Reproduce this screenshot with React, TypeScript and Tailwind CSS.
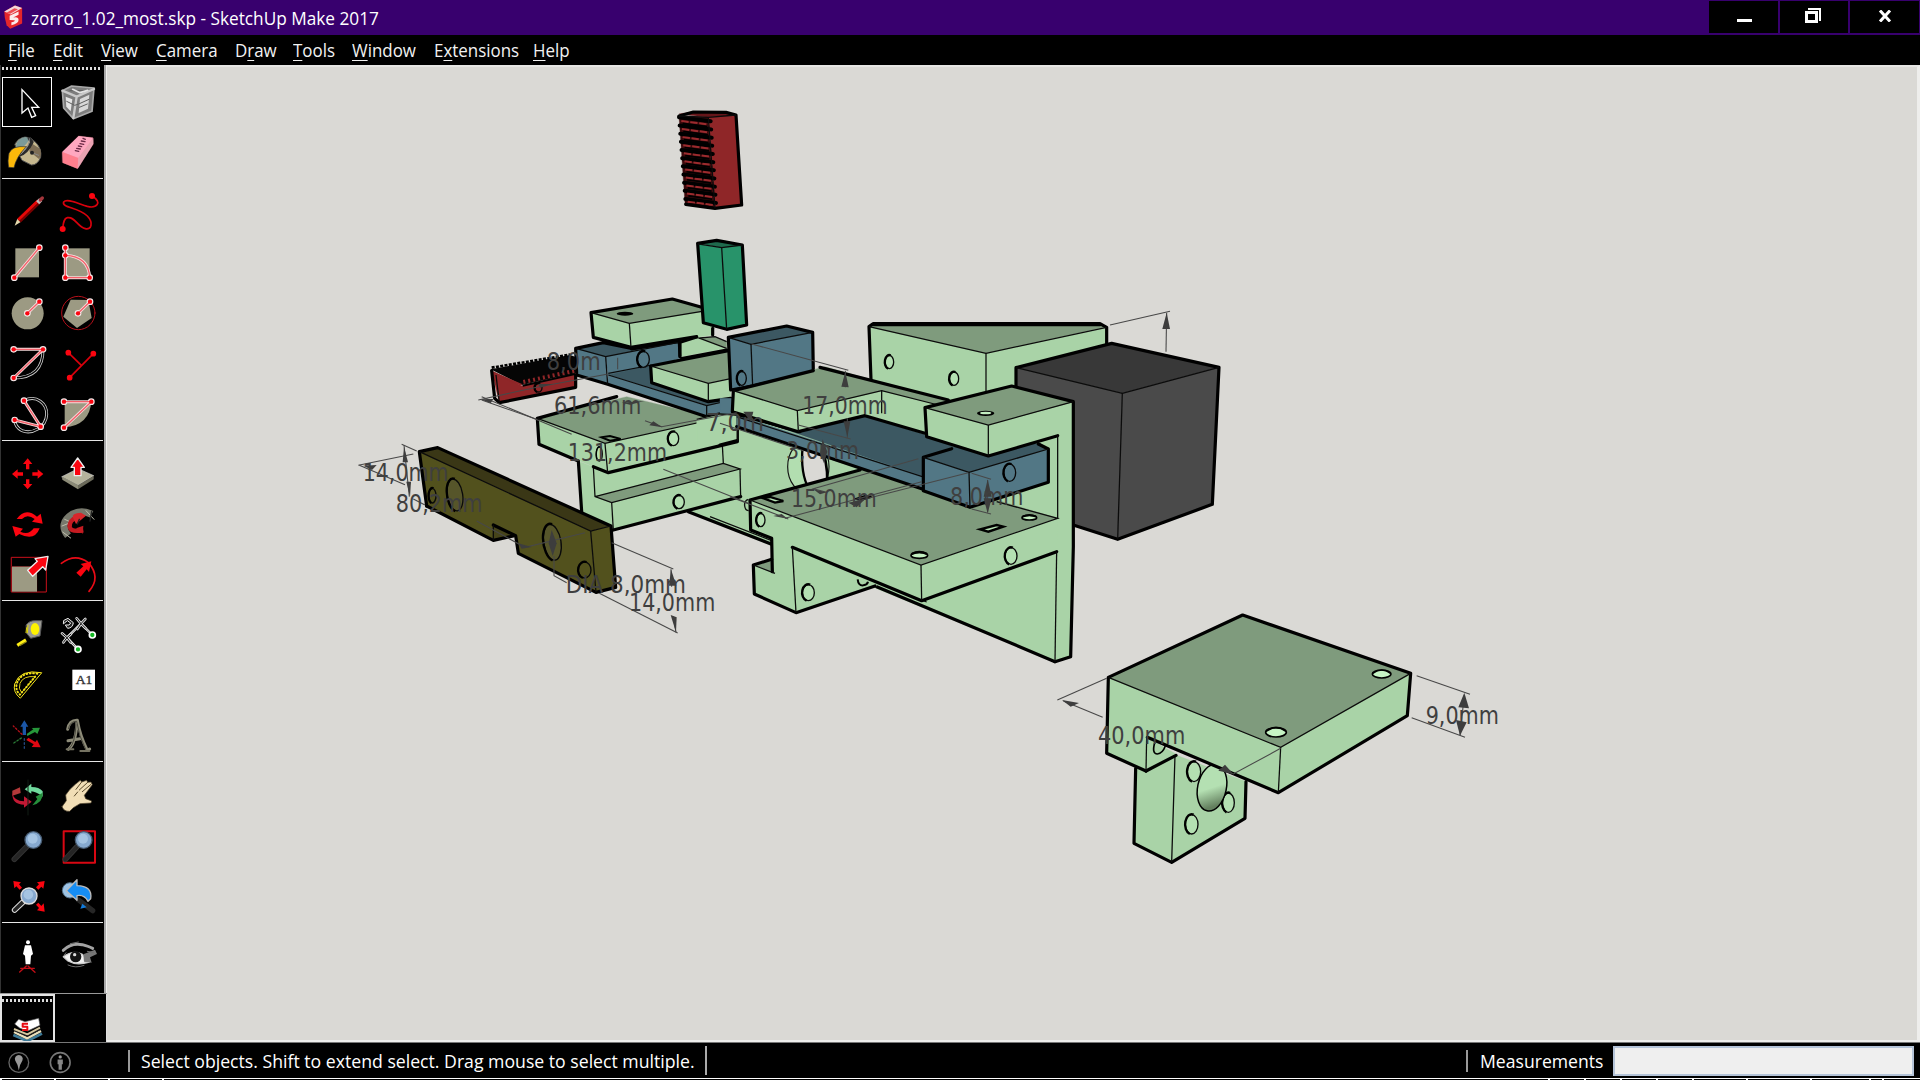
import type { ReactNode } from "react";

const LIGHT = "#a9d3a7";
const MID = "#7f9b7d";
const BLUE = "#527785";
const NAVY = "#3c5862";
const OLIVE = "#52511d";
const RED = "#8f2628";
const SAND = "#9c9a83";
const HOT = "#fb0510";

/* ---------- toolbar icons ---------- */

function Cell({ x, y, active, children }: { x: number; y: number; active?: boolean; children: ReactNode }) {
  return (
    <div className={active ? "h-[50px] w-[50px] outline outline-1 -outline-offset-1 outline-white" : "h-[50px] w-[50px]"}>
      <svg viewBox={`${x} ${y} 150 150`} className="block h-[50px] w-[50px] overflow-visible" fill="none" strokeLinejoin="round" strokeLinecap="round">
        {children}
      </svg>
    </div>
  );
}

function Nodes({ pts, lines }: { pts: number[][]; lines: string }) {
  return (
    <>
      <path d={lines} stroke="#f6dcdc" strokeWidth="9" />
      {pts.map((p, i) => (
        <circle key={i} cx={p[0]} cy={p[1]} r="10" fill="#f4eaea" />
      ))}
      <path d={lines} stroke="#f4606a" strokeWidth="4" />
      {pts.map((p, i) => (
        <circle key={i} cx={p[0]} cy={p[1]} r="6.5" fill={HOT} />
      ))}
    </>
  );
}

function Group({ children, pad }: { children: ReactNode; pad: string }) {
  return (
    <div className={`border-b border-[#e6e6e6] ${pad}`}>
      <div className="grid grid-cols-[50px_50px]">{children}</div>
    </div>
  );
}

const L = 6;
const R = 156;

function Magnifier({ cx, cy, r, to, edge = "#333" }: { cx: number; cy: number; r: number; to: number[]; edge?: string }) {
  return (
    <>
      <path d={`M${cx - r * 0.8} ${cy + r * 0.8} L${to[0]} ${to[1]}`} stroke={edge} strokeWidth="17" />
      <path d={`M${cx - r * 0.8} ${cy + r * 0.8} L${to[0]} ${to[1]}`} stroke="#252525" strokeWidth="11" />
      <circle cx={cx} cy={cy} r={r} fill="#86a9cf" stroke={edge === "#333" ? "#465a70" : "#ddd"} strokeWidth="4" />
      <circle cx={cx - 2} cy={cy - 4} r={r * 0.6} fill="#a5c4e2" />
    </>
  );
}

function Toolbar() {
  return (
    <div className="flex w-[107px] shrink-0 flex-col bg-black">
      <div className="flex h-[928px]">
        <div className="w-[104px] border-l border-[#333] pl-px pt-[2px]">
          <div className="mb-[7px] h-[3px] w-[100px] bg-[repeating-linear-gradient(90deg,#ddd_0_2px,#000_2px_4px)]" />
          <div className="w-[101px]">
            <Group pad="pb-px">
              <Cell x={L} y={39} active>
                <path d="M66 77V147L84 132L95 160L107 155L95 130L116 130Z" fill="#000" stroke="#fff" strokeWidth="4" strokeLinejoin="miter" />
              </Cell>
              <Cell x={R} y={39}>
                <path d="M187 80L215 66L282 72L276 142L220 164L191 132Z" fill="#7d7d7d" stroke="#aaa" strokeWidth="5" />
                <path d="M187 80L230 98L220 162M230 98L282 75" stroke="#c9c9c9" strokeWidth="7" />
                <path d="M197 98L217 106L212 142L199 128Z" fill="#e5e5e5" />
                <path d="M240 105L268 92L264 134L236 147Z" fill="#d8d8d8" />
                <path d="M200 112L224 124L236 120L267 106M238 130L262 120M210 80L262 80" stroke="#5f5f5f" strokeWidth="3" />
                <path d="M218 76L240 86L263 79" stroke="#e5e5e5" strokeWidth="5" />
              </Cell>
              <Cell x={L} y={189}>
                <path d="M45 240Q55 222 75 219L92 222L108 236Q126 255 122 280Q112 304 94 303L66 289L56 270Z" fill="#c6b88f" stroke="#555" strokeWidth="3" />
                <path d="M48 242Q55 222 78 219L88 226Q76 252 50 256Z" fill="#7c9a98" />
                <path d="M92 236L121 255Q126 274 117 285L88 262Z" fill="#7e6e55" />
                <path d="M88 224L96 234Q80 266 60 272" stroke="#2b2b2b" strokeWidth="10" />
                <path d="M96 266L116 274M88 224Q92 245 62 271" stroke="#888" strokeWidth="3" />
                <circle cx="96" cy="266" r="6" fill="#222" />
                <path d="M78 248Q36 244 27 268Q22 292 26 310L42 311Q48 280 78 248Z" fill="#fbb80a" stroke="#333" strokeWidth="2" />
              </Cell>
              <Cell x={R} y={189}>
                <path d="M187 264L236 216L279 221L280 240L233 314L188 296Z" fill="#f9a0b2" stroke="#5b2b35" strokeWidth="2" />
                <path d="M187 264L236 216L279 221L235 282Z" fill="#ffa8c0" />
                <path d="M187 264L235 282L233 314L188 296Z" fill="#ff7f8e" />
                <path d="M235 282L280 222L280 240L233 314Z" fill="#e9a3b2" />
                <path d="M226 260L236 262M230 253L241 255M235 246L245 248M240 239L251 241M244 231L255 233M249 223L256 226" stroke="#6a2a46" strokeWidth="4" />
              </Cell>
            </Group>
            <Group pad="pt-[9px] pb-[2px]">
              <Cell x={L} y={372}>
                <path d="M44 485L52 464L62 474Z" fill="#e4d9ad" />
                <path d="M57 470L117 412" stroke="#7a0000" strokeWidth="15" strokeLinecap="butt" />
                <path d="M55 467L114 410" stroke="#e60808" strokeWidth="8" strokeLinecap="butt" />
                <path d="M113 416L122 407" stroke="#bbb" strokeWidth="13" strokeLinecap="butt" />
                <path d="M121 408L127 402" stroke="#a5363c" strokeWidth="10" />
              </Cell>
              <Cell x={R} y={372}>
                <path d="M276 396C310 416 288 434 262 427C232 418 200 402 191 414C184 431 235 430 262 456C281 476 274 499 256 494C232 488 224 456 202 461C190 464 190 480 188 495" stroke="#d9000c" strokeWidth="5" />
                <circle cx="276" cy="396" r="9" fill={HOT} /><circle cx="188" cy="495" r="9" fill={HOT} />
              </Cell>
              <Cell x={L} y={522}>
                <rect x="46" y="553" width="71" height="87" fill={SAND} />
                <Nodes pts={[[118, 551], [43, 641]]} lines="M118 551L43 641" />
              </Cell>
              <Cell x={R} y={522}>
                <rect x="196" y="553" width="73" height="87" fill={SAND} />
                <Nodes pts={[[196, 551], [196, 574], [196, 641], [269, 641]]} lines="M196 551V641H269Q266 577 196 574" />
              </Cell>
              <Cell x={L} y={672}>
                <circle cx="83" cy="748" r="48" fill={SAND} />
                <Nodes pts={[[82, 748], [118, 713]]} lines="M82 748L118 713" />
              </Cell>
              <Cell x={R} y={672}>
                <path d="M212 707L265 708L275 762L231 792L190 758Z" fill={SAND} />
                <circle cx="235" cy="747" r="50" stroke="#b5101a" strokeWidth="3" />
                <Nodes pts={[[234, 748], [270, 713]]} lines="M234 748L270 713" />
              </Cell>
              <Cell x={L} y={822}>
                <path d="M129 856Q130 942 41 942" stroke="#ccc" strokeWidth="9" /><path d="M129 856Q130 942 41 942" stroke="#000" strokeWidth="4" />
                <Nodes pts={[[41, 856], [129, 856], [41, 942]]} lines="M41 856H129L41 942" />
              </Cell>
              <Cell x={R} y={822}>
                <path d="M205 866L244 904M280 869L209 941" stroke="#d9000c" strokeWidth="5" />
                <circle cx="205" cy="866" r="8.5" fill={HOT} /><circle cx="280" cy="869" r="8.5" fill={HOT} /><circle cx="209" cy="941" r="8.5" fill={HOT} />
              </Cell>
              <Cell x={L} y={972}>
                <path d="M72 1010C110 990 142 1020 140 1052C138 1090 96 1112 66 1100Q46 1090 44 1068" stroke="#ccc" strokeWidth="9" />
                <path d="M72 1010C110 990 142 1020 140 1052C138 1090 96 1112 66 1100Q46 1090 44 1068" stroke="#000" strokeWidth="4" />
                <Nodes pts={[[72, 1010], [122, 1088], [44, 1068]]} lines="M72 1010L122 1088L44 1068" />
              </Cell>
              <Cell x={R} y={972}>
                <path d="M194 1013H274Q268 1084 194 1090Z" fill={SAND} />
                <Nodes pts={[[192, 1013], [274, 1013], [192, 1091]]} lines="M192 1013H274L192 1091" />
              </Cell>
            </Group>
            <Group pad="pt-[8px] pb-px">
              <Cell x={L} y={39}>
                <path d="M83 67L97 84H88V100H78V84H69ZM83 160L97 144H88V130H78V144H69ZM36 114L53 100V109H69V119H53V128ZM130 114L113 100V109H97V119H113V128Z" fill={HOT} />
              </Cell>
              <Cell x={R} y={39}>
                <path d="M186 122L234 98L281 119L234 148Z" fill="#b5b39c" stroke="#ddd" strokeWidth="2" />
                <path d="M186 122L234 148V160L187 131Z" fill="#8b8a76" /><path d="M281 119L234 148V160L281 130Z" fill="#6b6a5a" />
                <path d="M233 66L253 94H243V119H223V94H213Z" fill={HOT} stroke="#eee" strokeWidth="4" />
              </Cell>
              <Cell x={L} y={189}>
                <path d="M50 249Q76 212 111 242L122 233L128 263L96 257L104 249Q82 232 66 249Z" fill={HOT} />
                <path d="M119 277Q104 317 58 294L47 302L37 270L69 278L61 287Q86 299 101 277Z" fill={HOT} />
              </Cell>
              <Cell x={R} y={189}>
                <path d="M204 299Q175 262 217 235Q245 220 275 235" stroke="#77786c" strokeWidth="22" strokeLinecap="butt" />
                <path d="M188 288L212 306M186 270L206 262M194 250L212 258M258 224L282 250" stroke="#bdbdab" strokeWidth="3" />
                <path d="M250 283Q202 291 210 263Q216 245 240 245" stroke="#c41b21" strokeWidth="13" strokeLinecap="butt" />
                <path d="M219 245Q214 231 243 230L258 239L228 264Z" fill="#d8262b" /><path d="M228 277L250 269L248 293Z" fill="#c41b21" />
                <path d="M238 250L232 264M275 226L270 255" stroke="#222" strokeWidth="4" />
              </Cell>
              <Cell x={L} y={339}>
                <path d="M35 364H139V468H35Z" stroke="#c9101b" strokeWidth="3" />
                <path d="M110 364V468M35 392H139" stroke="#7b0a10" strokeWidth="3" />
                <rect x="36" y="392" width="75" height="75" fill={SAND} />
                <path d="M144 361L137 402L128 392L98 421L83 403L112 376L105 368Z" fill={HOT} stroke="#eee" strokeWidth="4" />
              </Cell>
              <Cell x={R} y={339}>
                <path d="M184 382Q226 350 265 380Q304 424 267 466" stroke="#e80b16" strokeWidth="5" />
                <path d="M274 376L267 408L260 400L242 422L229 410L250 391L242 384Z" fill={HOT} />
              </Cell>
            </Group>
            <Group pad="pt-[8px] pb-[2px]">
              <Cell x={L} y={519}>
                <path d="M52 628L78 612" stroke="#ffef14" strokeWidth="10" strokeLinecap="butt" />
                <path d="M60 628L78 618" stroke="#8a8212" strokeWidth="4" />
                <path d="M79 566Q88 553 108 554L126 554L120 600L92 607L80 592Z" fill="#9b9a93" stroke="#555" strokeWidth="3" />
                <ellipse cx="105" cy="579" rx="13" ry="18" fill="#fff200" /><path d="M84 568L82 590M80 575L78 590" stroke="#ddd200" strokeWidth="3" />
              </Cell>
              <Cell x={R} y={519}>
                <path d="M201 605L234 640M243 563L277 597M201 605L243 563" stroke="#eee" strokeWidth="7" />
                <path d="M201 605L234 640M243 563L277 597M201 605L243 563" stroke="#444" strokeWidth="2" />
                <path d="M186 592L201 605L190 619M213 594L201 605L212 619M230 547L243 563L232 579M256 549L243 563L257 577" stroke="#ddd" strokeWidth="8" />
                <path d="M186 592L201 605L190 619M213 594L201 605L212 619M230 547L243 563L232 579M256 549L243 563L257 577" stroke="#111" strokeWidth="3" />
                <path d="M192 553L204 547L220 560Q218 576 203 577L196 567H207L212 561L202 554L191 563Z" fill="#222" stroke="#eee" strokeWidth="3" />
                <circle cx="277" cy="597" r="9" fill="#13b824" stroke="#fff" strokeWidth="5" /><circle cx="234" cy="640" r="9" fill="#13b824" stroke="#fff" strokeWidth="5" />
              </Cell>
              <Cell x={L} y={669}>
                <path d="M124 710Q60 698 44 744Q38 768 60 786Z" stroke="#f8e71b" strokeWidth="3" />
                <path d="M105 722Q70 718 60 742Q54 758 64 769Z" stroke="#dfcf18" strokeWidth="3" />
                <path d="M112 713Q62 706 50 744Q46 764 60 776L110 716" stroke="#f3e21a" strokeWidth="6" strokeDasharray="2 8" />
              </Cell>
              <Cell x={R} y={669}>
                <rect x="217" y="701" width="68" height="61" fill="#fff" />
                <text x="227" y="743" fontSize="35" fill="#333" stroke="#333" strokeWidth="1" textLength="50" lengthAdjust="spacingAndGlyphs" fontFamily="Liberation Serif, serif">A1</text>
              </Cell>
              <Cell x={L} y={819}>
                <path d="M73 853L85 872H78V897H68V872H61Z" fill="#1b56a6" /><path d="M73 908V944" stroke="#23477d" strokeWidth="4" strokeDasharray="5 7" />
                <path d="M120 875L112 894L105 888L82 900L80 894L100 880L95 876Z" fill="#26963a" /><path d="M64 906L40 922" stroke="#2b7d38" strokeWidth="4" strokeDasharray="5 6" />
                <path d="M122 934L95 933L101 925L79 912L85 905L106 918L111 911Z" fill="#e00812" /><path d="M66 895L40 870" stroke="#b41019" strokeWidth="4" strokeDasharray="5 6" />
              </Cell>
              <Cell x={R} y={819}>
                <path d="M203 880Q208 852 232 853Q240 900 262 943L269 939M205 940Q228 922 231 856M204 914L240 908" stroke="#8d8b78" strokeWidth="9" />
                <path d="M200 940H220M241 945H268" stroke="#747261" strokeWidth="6" />
                <path d="M205 878Q210 855 230 856Q236 900 257 940M209 936Q225 922 228 866" stroke="#3c3b33" strokeWidth="2.5" />
              </Cell>
            </Group>
            <Group pad="pt-[8px] pb-[2px]">
              <Cell x={L} y={30}>
                <path d="M37 107V92L60 82L62 99Z" fill="#b4393a" /><path d="M37 100Q42 123 72 124V109L95 125L72 143V134Q36 134 37 100Z" fill="#c21934" />
                <path d="M128 110V94Q118 81 94 81V71L74 88L94 101V94Q108 95 128 110Z" fill="#70d99d" />
                <path d="M97 136Q130 127 128 98L107 110L112 117Z" fill="#268e3b" /><path d="M84 60V165" stroke="#111d14" strokeWidth="3" />
              </Cell>
              <Cell x={R} y={30}>
                <path d="M186 140L199 122L197 105L210 88L226 73L241 61L245 66L260 61L263 67L273 66L277 74L253 106L257 116L275 123L273 129L240 131L220 143L209 154Q192 155 186 140Z" fill="#f1deb6" stroke="#4a3e28" strokeWidth="2" />
                <path d="M228 88L245 66M238 90L263 67M247 95L273 73M223 108L233 96" stroke="#59492b" strokeWidth="3" />
              </Cell>
              <Cell x={L} y={180}><Magnifier cx={100} cy={240} r={25} to={[43, 298]} /></Cell>
              <Cell x={R} y={180}>
                <rect x="191" y="214" width="94" height="94" stroke="#d90712" strokeWidth="6" /><Magnifier cx={251} cy={240} r={25} to={[196, 298]} />
              </Cell>
              <Cell x={L} y={330}>
                <path d="M40 363L63 367L57 373L66 383L59 389L49 379L43 385ZM134 363L130 386L124 380L115 389L108 382L117 373L111 367ZM134 455L111 451L117 444L108 434L115 428L124 438L131 430Z" fill={HOT} />
                <Magnifier cx={87} cy={408} r={24} to={[44, 450]} edge="#ddd" />
              </Cell>
              <Cell x={R} y={330}>
                <path d="M236 420L278 452" stroke="#262626" strokeWidth="16" /><circle cx="210" cy="391" r="23" fill="#9cc3e5" stroke="#536d82" strokeWidth="3" />
                <path d="M199 392L231 359V377Q278 378 272 416L264 424Q253 403 231 407V421Z" fill="#168df4" stroke="#bbb" strokeWidth="4" />
                <path d="M241 446L247 431L260 442Z" fill="#127bdb" />
              </Cell>
            </Group>
            <div className="grid grid-cols-[50px_50px] pt-[8px]">
              <Cell x={L} y={513}>
                <circle cx="84" cy="547" r="6" fill="#fff" /><path d="M75 556H93L99 582L93 587L91 613H77L75 587L69 582Z" fill="#fff" />
                <path d="M79 618L59 636M84 618L105 637M62 625H103" stroke="#c20e16" strokeWidth="4" />
              </Cell>
              <Cell x={R} y={513}>
                <path d="M190 571Q212 548 247 554Q268 560 278 565" stroke="#a3a3a3" strokeWidth="9" />
                <path d="M190 590Q220 568 247 583L268 606Q230 618 204 603Z" fill="#f2f2f2" stroke="#ccc" strokeWidth="4" />
                <path d="M250 583L285 569L291 582L270 592L275 608L252 605Z" fill="#777" />
                <circle cx="227" cy="590" r="17" fill="#141414" /><circle cx="224" cy="584" r="5" fill="#ddd" />
                <path d="M204 615Q227 626 252 616M211 551L235 546M198 578L192 586M262 574L280 577" stroke="#6e6e6e" strokeWidth="3" />
              </Cell>
            </div>
          </div>
        </div>
        <div className="w-[2px] bg-[#a9a9a9]" />
        <div className="w-px bg-[#f0f0ee]" />
      </div>
      <div className="flex h-[49px] border-t border-[#999]">
        <div className="h-[48px] w-[55px] border-2 border-[#e4e4e4] bg-black pt-[3px]">
          <div className="h-[3px] w-full bg-[repeating-linear-gradient(90deg,#ddd_0_2px,#000_2px_4px)]" />
          <svg viewBox="6 728 150 114" className="mt-px h-[38px] w-[50px]" fill="none" strokeLinejoin="round">
            <path d="M40 824L82 842L126 820" stroke="#3d7a97" strokeWidth="8" />
            <path d="M42 815L82 834L123 812" stroke="#e8dfba" strokeWidth="7" />
            <path d="M42 811L82 828L122 807" stroke="#222" strokeWidth="3" />
            <path d="M42 806L82 822L120 802" stroke="#d5c79f" strokeWidth="6" />
            <path d="M44 791L56 777L75 784L116 774L120 795L83 812L60 804Z" fill="#fff" stroke="#555" strokeWidth="2" />
            <path d="M84 790H68V799H82V809H66" stroke="#e70b12" strokeWidth="6" />
          </svg>
        </div>
        <div className="ml-auto w-px bg-[#e0e0e0]" />
      </div>
    </div>
  );
}

/* ---------- model ---------- */

function F({ p, c }: { p: string; c: string }) {
  return <polygon points={p} fill={c} stroke={c} strokeWidth="1" />;
}
function T({ p }: { p: string }) {
  return <polyline points={p} fill="none" stroke="#0b0b0b" strokeWidth="3.8" />;
}
function B({ p }: { p: string }) {
  return <polyline points={p} fill="none" stroke="#000" strokeWidth="9.6" strokeLinejoin="round" strokeLinecap="round" />;
}
function D({ p }: { p: string }) {
  return <polyline points={p} fill="none" stroke="#484848" strokeWidth="3.2" />;
}
function H({ x, y, rx, ry, c = "#b4e0b2", w = 7 }: { x: number; y: number; rx: number; ry: number; c?: string; w?: number }) {
  return (
    <>
      <ellipse cx={x} cy={y} rx={rx} ry={ry} fill={c} stroke="#0a0a0a" strokeWidth="4" />
      <path d={`M${x + rx * 0.3} ${y - ry}A${rx} ${ry} 0 0 0 ${x - rx * 0.3} ${y + ry}`} fill="none" stroke="#000" strokeWidth={w} />
    </>
  );
}
function A({ p }: { p: string }) {
  return <polygon points={p} fill="#3d3d3d" />;
}
function Dim({ x, y, w, children }: { x: number; y: number; w: number; children: string }) {
  return (
    <text x={x} y={y} fontSize="73" textLength={w} lengthAdjust="spacingAndGlyphs" fill="#3f3f3f" fontFamily="DejaVu Sans, sans-serif">
      {children}
    </text>
  );
}
function Z({ x, y, children }: { x: number; y: number; children: ReactNode }) {
  return <g transform={`translate(${x} ${y}) scale(0.33333)`}>{children}</g>;
}

const teeth = Array.from({ length: 11 }, (_, i) => i);

function Model() {
  return (
    <svg viewBox="107 67 1810 973" className="block h-[973px] w-[1810px]" fill="none">
      {/* rear bracket, motor and wall plate */}
      <Z x={720} y={300}>
        <F p="447,80 798,160 798,320 453,260" c={LIGHT} />
        <F p="798,160 1160,80 1160,300 798,320" c={LIGHT} />
        <F p="447,80 460,70 1140,70 1160,80 798,160" c={MID} />
        <B p="453,240 447,80 460,71 1140,71 1160,82 1160,140" />
        <B p="460,74 1140,74" />
        <T p="447,80 798,160 1160,82" /><T p="798,160 798,290" />
        <H x={508} y={186} rx={13} ry={20} /><H x={702} y={236} rx={14} ry={20} />
        <F p="888,203 1207,280 1193,718 1062,676 888,600" c="#4a4a4a" />
        <F p="1207,280 1497,202 1477,613 1193,718" c="#4a4a4a" />
        <F p="888,203 1175,130 1497,202 1207,280" c="#383838" />
        <B p="888,265 888,203 1175,130 1497,202 1477,613 1193,718 1062,676" />
        <T p="888,203 1207,280 1497,202" /><T p="1207,280 1193,718" />
        <F p="-120,420 -60,340 480,272 690,310 1013,405 1010,755 1005,1085 -95,635" c={LIGHT} />
        <B p="-95,635 155,733" /><T p="-30,650 155,722" /><B p="470,860 1005,1085" /><T p="480,852 620,906" />
        <ellipse cx="265" cy="500" rx="62" ry="80" fill="#b2deb0" stroke="#111" strokeWidth="3.5" />
        <path d="M248 440Q240 520 268 570L322 560Q326 480 300 430Z" fill="#dad9d5" />
        <path d="M248 440Q240 520 268 570" stroke="#000" strokeWidth="7" /><path d="M298 430Q324 480 322 550" stroke="#000" strokeWidth="8" />
      </Z>
      {/* lower left clamp */}
      <Z x={350} y={400}>
        <F p="685,183 775,218 1120,130 1120,190 1172,207 1172,290 790,390 695,335" c={LIGHT} />
        <F p="735,290 1120,190 1170,207 785,308" c={MID} />
        <T p="730,200 735,290 785,308 1170,207 1120,190 735,290" /><T p="1117,135 1120,190" /><T p="785,308 790,390" />
        <F p="562,55 765,130 775,218 567,133" c={LIGHT} /><F p="765,130 1162,42 1162,125 775,218" c={LIGHT} />
        <F p="562,55 830,-10 1080,50 1162,42 765,130" c={MID} />
        <B p="800,-10 562,55 567,133 685,183 695,335" /><B p="730,200 775,218 1162,125 1162,42" /><B p="790,390 1172,290" /><T p="1170,207 1172,290" />
        <T p="562,55 765,130 1162,42" /><T p="765,130 773,218" />
        <H x={970} y={116} rx={16} ry={21} /><H x={987} y={306} rx={16} ry={20} /><H x={748} y={162} rx={9} ry={21} w={4} />
        <path d="M755 112L780 108L812 117L780 122Z" fill={MID} stroke="#000" strokeWidth="6" />
        <path d="M1195 298Q1182 302 1184 318Q1186 332 1196 332" stroke="#111" strokeWidth="4" />
      </Z>
      {/* long slide, left end */}
      <Z x={460} y={100}>
        <F p="347,745 437,770 443,853 350,825" c={BLUE} /><F p="437,770 660,725 660,775 580,800 445,835" c={BLUE} />
        <F p="347,745 430,728 520,745 655,725 437,770" c={NAVY} />
        <F p="445,825 575,795 600,845 745,905 820,895 820,920 740,917" c={NAVY} />
        <F p="445,825 740,917 740,950 443,853" c={BLUE} /><F p="740,917 820,900 820,935 740,950" c={BLUE} />
        <B p="430,728 347,745 350,825 443,853 740,950 815,935" /><B p="515,747 658,724 660,770" />
        <T p="347,745 437,770 655,727" /><T p="437,770 443,853" /><T p="445,825 740,917 815,900" /><T p="445,820 575,795" /><T p="740,917 740,950" />
        <B p="430,728 515,745" /><H x={550} y={778} rx={18} ry={24} c={BLUE} />
        <F p="660,728 712,710 800,745 665,770" c={LIGHT} /><F p="718,714 765,710 800,725 800,743" c={MID} />
        <B p="660,768 660,727 712,710" /><T p="712,712 800,745" /><T p="718,714 765,710 800,725" /><B p="665,776 800,750" />
        <F p="393,638 508,670 513,742 400,712" c={LIGHT} /><F p="508,670 757,630 760,705 513,742" c={LIGHT} />
        <F p="393,638 637,597 757,630 508,670" c={MID} />
        <B p="725,622 637,597 393,638 400,712 513,742 710,710" /><B p="758,685 758,705" />
        <T p="393,638 508,670 735,633" /><T p="508,670 513,742" />
        <ellipse cx="495" cy="641" rx="25" ry="6" fill="#000" />
        <F p="572,798 745,850 745,905 575,848" c={LIGHT} /><F p="745,850 812,835 812,893 745,905" c={LIGHT} />
        <F p="572,798 805,752 812,835 745,850" c={MID} />
        <B p="805,752 572,798 575,848 745,905 812,895" /><T p="572,798 745,850 812,836" /><T p="745,850 745,905" />
        <F p="805,712 873,733 878,860 812,870" c={BLUE} /><F p="873,733 1058,697 1060,817 878,860" c={BLUE} /><F p="805,712 980,678 1058,697 873,733" c={NAVY} />
        <B p="812,870 805,712 980,678 1058,697 1060,817 878,858 812,870" />
        <T p="805,712 873,733 1058,697" /><T p="873,733 878,858" /><H x={845} y={835} rx={14} ry={21} c={BLUE} />
      </Z>
      {/* slide, shelf and carriage */}
      <Z x={720} y={300}>
        <F p="90,600 430,508 620,560 830,600 1013,655 603,795" c={MID} />
        <F p="0,295 35,295 60,350 0,350" c={BLUE} />
        <F p="-70,358 0,342 50,345 50,422 -70,440" c={LIGHT} />
        <T p="-70,358 0,342 50,345" /><B p="0,435 52,422" /><T p="52,345 52,422" />
        <F p="40,335 230,395 440,345 620,405 700,440 607,475 607,530" c={NAVY} />
        <F p="50,345 607,528 607,567 50,385" c={BLUE} />
        <B p="40,340 240,395" /><T p="50,350 607,530" /><B p="50,380 607,567" />
        <F p="40,272 232,332 235,395 40,335" c={LIGHT} /><F p="232,332 485,272 485,335 235,395" c={LIGHT} />
        <F p="485,272 660,310 620,405 435,345 485,335" c={LIGHT} />
        <F p="40,272 315,200 685,303 655,315 485,272 232,332" c={MID} />
        <B p="280,212 40,272 37,335 235,395 435,347 615,400" /><B p="300,202 685,300" />
        <T p="40,272 232,332 485,272 655,315" /><T p="232,332 235,395" /><T p="485,272 485,340" />
        <F p="610,472 747,517 750,622 610,572" c={BLUE} /><F p="747,517 985,447 985,547 750,622" c={BLUE} />
        <F p="610,472 700,440 960,430 985,447 747,517" c={NAVY} />
        <B p="695,446 610,472 610,572 750,622 985,547 985,447 955,432" />
        <T p="610,472 747,517 985,447" /><T p="747,517 750,622" /><H x={869} y={518} rx={18} ry={26} c={BLUE} />
        <F p="615,323 805,375 805,468 620,410" c={LIGHT} />
        <F p="805,375 1060,305 1052,1070 1005,1085 1013,405 805,468" c={LIGHT} />
        <F p="615,323 875,258 1060,305 805,375" c={MID} />
        <B p="1013,407 805,468 620,410 615,323 875,258 1060,305 1060,740 1052,1070 1005,1085" />
        <T p="615,323 805,375 1060,305" /><T p="805,375 805,468" /><T p="1013,405 1013,657" />
        <ellipse cx="797" cy="340" rx="26" ry="8" fill="#000" /><ellipse cx="797" cy="339" rx="17" ry="4" fill="#c3efc1" />
        <F p="90,600 603,795 605,902 217,742 228,938 103,882 100,795 155,780 155,715 92,690" c={LIGHT} />
        <F p="217,742 470,845 470,858 228,938" c={LIGHT} /><F p="603,795 1013,655 1010,755 605,902" c={LIGHT} />
        <F p="100,795 155,780 162,820" c={MID} />
        <B p="420,510 90,600 92,690 155,715 157,815" /><B p="155,778 100,795 103,882 228,938 465,858" /><B p="217,742 605,902 1010,755" />
        <T p="90,600 603,795 1013,655 830,605" /><T p="603,795 605,902" /><T p="217,742 228,938" /><T p="1010,755 1005,1085" /><T p="100,795 165,820" />
        <H x={122} y={660} rx={13} ry={20} /><H x={265} y={878} rx={18} ry={24} /><H x={873} y={768} rx={18} ry={25} />
        <path d="M413 838Q415 858 430 856Q442 854 444 845" stroke="#000" strokeWidth="6" />
        <ellipse cx="598" cy="766" rx="25" ry="9" fill="#c3efc1" stroke="#000" strokeWidth="5" /><path d="M575 762Q598 750 621 762" stroke="#000" strokeWidth="7" />
        <ellipse cx="928" cy="653" rx="22" ry="7" fill="#c3efc1" stroke="#000" strokeWidth="5" /><path d="M908 650Q928 640 948 650" stroke="#000" strokeWidth="6" />
        <path d="M780 688L830 675L850 680L805 695Z" fill="#b4e0b2" stroke="#000" strokeWidth="7" />
        <path d="M130 595L150 591L190 603L165 608Z" fill="#b4e0b2" stroke="#000" strokeWidth="7" />
        <path d="M405 597L435 587L455 591L425 600Z" fill="#222" stroke="#000" strokeWidth="4" />
      </Z>
      {/* olive link bar */}
      <Z x={350} y={400}>
        <F p="208,155 722,393 738,577 505,460 497,407 430,375 430,420 230,318" c={OLIVE} />
        <F p="722,393 783,378 797,562 738,577" c={OLIVE} /><F p="208,155 263,143 783,378 722,393" c="#3a3716" />
        <F p="430,375 495,407 430,421" c="#46441a" />
        <B p="230,318 208,155 263,143 783,378 797,562 738,577 505,460 497,407 430,375" /><B p="230,318 430,421 490,408" />
        <T p="208,155 722,393 783,378" /><T p="722,393 738,577" /><T p="430,375 430,421" />
        <g transform="rotate(-9 315 285)"><H x={315} y={285} rx={23} ry={48} c="#56552a" /></g>
        <g transform="rotate(-9 607 427)"><H x={607} y={427} rx={26} ry={54} c="#56552a" /></g>
        <H x={247} y={287} rx={11} ry={22} c={OLIVE} /><H x={704} y={510} rx={19} ry={24} c={OLIVE} />
      </Z>
      {/* racks and pin */}
      <Z x={460} y={100}>
        <F p="95,812 185,858 347,820 347,862 118,908" c={RED} />
        <polygon points="92,808 330,765 345,770 347,820 185,855" fill="#050505" />
        <path d="M95 803L330 764" stroke="#000" strokeWidth="8" strokeDasharray="9 4" />
        <path d="M100 818L185 855" stroke={RED} strokeWidth="6" /><path d="M190 846L345 812" stroke={RED} strokeWidth="12" strokeDasharray="6 9" />
        <path d="M188 857L345 822" stroke="#000" strokeWidth="6" />
        <B p="95,812 104,895 118,908 347,862 347,825" /><T p="108,825 118,908" /><H x={235} y={863} rx={11} ry={13} c={RED} />
        <F p="745,50 828,45 845,315 765,325" c={RED} /><F p="657,48 745,50 765,325 675,310" c="#3b0a0c" />
        <F p="657,42 700,35 790,36 828,45 745,52" c="#651519" />
        {teeth.map((i) => (
          <g key={i}>
            <path d={`M${657 + i * 1.9} ${52 + i * 24.5}L${752 + i * 1.6} ${64 + i * 24.5}`} stroke="#000" strokeWidth="12" strokeLinecap="round" />
            <path d={`M${664 + i * 1.9} ${63 + i * 24.2}L${750 + i * 1.6} ${74 + i * 24.2}`} stroke="#9b2b2e" strokeWidth="6" strokeDasharray="22 5" />
            <path d={`M${668 + i * 1.9} ${70 + i * 24.2}L${742 + i * 1.6} ${80 + i * 24.2}`} stroke="#000" strokeWidth="5" />
          </g>
        ))}
        <B p="657,48 700,36 798,37 828,45 845,315 765,325 677,313" /><T p="657,48 745,52 828,45" /><T p="745,52 765,325" />
        <F p="713,432 785,443 800,688 730,668" c="#28936a" /><F p="785,443 847,435 860,675 800,688" c="#28936a" />
        <F p="713,430 770,420 847,435 785,443" c="#1f6a4d" />
        <B p="713,430 770,421 847,435 860,675 800,688 730,668 713,430" /><T p="713,432 785,443 847,435" /><T p="785,443 800,688" />
      </Z>
      {/* detached carriage plate */}
      <Z x={1040} y={600}>
        <F p="287,500 320,512 408,465 620,545 615,655 395,787 282,730" c={LIGHT} />
        <B p="287,505 282,730 395,787 615,655 618,545" /><T p="405,465 395,787" />
        <H x={565} y={608} rx={18} ry={29} /><H x={455} y={673} rx={19} ry={29} />
        <H x={462} y={515} rx={20} ry={30} />
        <defs>
          <linearGradient id="bore" x1="0" y1="0" x2="0.35" y2="1"><stop offset="0.6" stopColor="#b4e0b2" /><stop offset="1" stopColor="#64805f" /></linearGradient>
        </defs>
        <g transform="rotate(12 516 563)"><ellipse cx="516" cy="563" rx="43" ry="71" fill="url(#bore)" stroke="#000" strokeWidth="4.5" /></g>
        <F p="205,232 722,442 715,578 322,412 318,513 200,460" c={LIGHT} /><F p="320,412 408,462 318,513" c={LIGHT} />
        <F p="722,442 1112,220 1102,347 715,578" c={LIGHT} /><F p="205,232 608,45 1112,220 722,442" c={MID} />
        <B p="318,513 200,460 205,232 608,45 1112,220 1102,347 715,578 322,412" /><B p="318,513 408,466" />
        <T p="205,232 722,442 1112,220" /><T p="722,442 715,578" /><T p="320,412 318,513" />
        <path d="M344 428Q335 462 352 462Q368 460 376 438" stroke="#000" strokeWidth="5" />
        <ellipse cx="1025" cy="222" rx="28" ry="12" fill="#c6f4c4" stroke="#000" strokeWidth="5" /><path d="M998 220Q1025 200 1052 220" stroke="#000" strokeWidth="5" />
        <ellipse cx="708" cy="397" rx="31" ry="14" fill="#c6f4c4" stroke="#000" strokeWidth="5" /><path d="M678 394Q708 372 738 394" stroke="#000" strokeWidth="5" />
        <D p="200,235 52,300" /><D p="70,303 188,352" /><A p="66,300 117,309 92,320" />
        <D p="722,445 580,522 540,507" /><A p="580,522 535,512 555,494" />
        <D p="1130,227 1290,283" /><D p="1115,353 1275,412" /><D p="1273,285 1260,405" />
        <A p="1273,278 1287,325 1255,322" /><A p="1260,407 1280,367 1248,360" />
        <Dim x={174} y={432} w={262}>40,0mm</Dim><Dim x={1157} y={372} w={220}>9,0mm</Dim>
      </Z>
      {/* dimensions */}
      <Z x={350} y={400}>
        <D p="25,196 190,162" /><D p="28,196 165,254" /><D p="155,133 200,153" /><D p="162,135 178,290" /><D p="190,297 225,315" />
        <A p="162,140 174,187 158,187" /><A p="40,197 80,195 66,210" /><A p="180,290 169,245 183,245" />
        <D p="380,363 525,442 705,398" /><A p="545,441 505,430 515,446" /><A p="605,390 620,430 608,468 596,430" /><D p="612,468 612,527 650,548" />
        <D p="785,428 970,507" /><D p="748,580 983,699" /><D p="963,508 965,560" /><D p="970,650 978,697" />
        <A p="963,508 979,557 957,557" /><A p="978,697 962,645 980,652" />
        <D p="395,-10 665,103" /><D p="885,62 935,80 1160,38" /><A p="937,82 898,76 910,64" /><D p="940,208 1195,310" />
        <Dim x={38} y={244} w={258}>14,0mm</Dim><Dim x={137} y={337} w={261}>80,2mm</Dim><Dim x={653} y={183} w={298}>131,2mm</Dim>
        <Dim x={647} y={579} w={361}>DIA 8,0mm</Dim><Dim x={837} y={633} w={259}>14,0mm</Dim>
      </Z>
      <Z x={460} y={100}>
        <D p="55,900 230,862 440,823" /><D p="65,900 230,958" /><A p="62,898 100,897 92,910" /><A p="278,852 235,852 240,863" />
        <D p="473,773 473,808" /><A p="485,908 553,903 510,914" />
        <Dim x={260} y={809} w={162}>8,0m</Dim><Dim x={282} y={942} w={262}>61,6mm</Dim>
      </Z>
      <Z x={720} y={300}>
        <D p="1170,75 1350,34" /><D p="1340,38 1338,155" /><A p="1340,38 1350,87 1327,87" />
        <D p="95,132 385,211" /><D p="376,212 376,262" /><A p="376,215 386,262 364,260" />
        <D p="382,355 382,415" /><A p="382,412 371,364 391,364" /><D p="235,375 392,417" /><D p="0,370 250,452" /><A p="308,418 300,460 312,490 322,455" />
        <D p="595,476 280,566 320,577" /><A p="280,568 320,577 300,583" />
        <D p="745,518 400,606" /><D p="605,545 195,655" /><A p="385,608 435,598 410,622" /><A p="203,656 160,648 185,642" /><D p="30,590 205,657" />
        <D p="755,520 813,538" /><D p="755,627 813,642" /><D p="803,540 803,637" /><A p="803,538 815,590 791,590" /><A p="803,640 815,595 791,595" />
        <A p="70,335 100,335 92,365" />
        <Dim x={247} y={342} w={256}>17,0mm</Dim><Dim x={198} y={478} w={219}>3,0mm</Dim><Dim x={213} y={620} w={257}>15,0mm</Dim>
        <Dim x={690} y={616} w={220}>8,0mm</Dim><Dim x={-42} y={394} w={174}>7,0m</Dim>
      </Z>
    </svg>
  );
}

/* ---------- window ---------- */

const menus = [
  { pre: "", key: "F", post: "ile", w: "w-[45px]" },
  { pre: "", key: "E", post: "dit", w: "w-[48px]" },
  { pre: "", key: "V", post: "iew", w: "w-[55px]" },
  { pre: "", key: "C", post: "amera", w: "w-[79px]" },
  { pre: "D", key: "r", post: "aw", w: "w-[58px]" },
  { pre: "", key: "T", post: "ools", w: "w-[59px]" },
  { pre: "", key: "W", post: "indow", w: "w-[82px]" },
  { pre: "E", key: "x", post: "tensions", w: "w-[99px]" },
  { pre: "", key: "H", post: "elp", w: "w-[60px]" },
];

const seams = [0, 54, 108, 162, 1548, 1584, 1620, 1656, 1692, 1746, 1810, 1869, 1882];

export default function App() {
  return (
    <div className="flex h-[1080px] w-[1920px] flex-col overflow-hidden bg-black font-['Open_Sans',sans-serif] text-[18px] leading-none text-white">
      <header className="flex h-[35px] bg-[#38006e]">
        <svg viewBox="0 0 66 84" className="ml-[3px] mt-[5px] h-[25px] w-[21px]">
          <path d="M2 22L38 2L62 10V62L22 80L10 68L4 44Z" fill="#e5262b" />
          <path d="M2 22L38 2L62 10L24 32Z" fill="#f3d8da" />
          <path d="M8 27L36 11L48 14L22 29Z" fill="#ef4b50" />
          <path d="M20 36L50 22V33L32 42Q50 38 50 50Q50 62 26 68V58Q38 56 37 51L20 50Z" fill="#fbeaea" />
        </svg>
        <span className="ml-[7px] mt-[9px] w-[400px] origin-left scale-x-[0.957] whitespace-nowrap">zorro_1.02_most.skp - SketchUp Make 2017</span>
        <div className="ml-auto mr-px mt-px flex h-[32px] gap-[2px]">
          <div className="flex w-[69px] justify-center bg-black"><div className="mt-[18px] ml-[2px] h-[3px] w-[15px] bg-white" /></div>
          <div className="flex w-[68px] justify-center bg-black">
            <svg viewBox="0 0 16 15" className="mr-[2px] mt-[7px] h-[15px] w-[16px]" shapeRendering="crispEdges" fill="none" stroke="#fff">
              <path d="M3 1H15V13" strokeWidth="2" /><rect x="1.5" y="4.5" width="10" height="9" strokeWidth="3" />
            </svg>
          </div>
          <div className="flex w-[69px] justify-center bg-black">
            <svg viewBox="0 0 14 12" className="mt-[9px] h-[12px] w-[14px]"><path d="M2 0.5L12 11.5M12 0.5L2 11.5" stroke="#fff" strokeWidth="3" /></svg>
          </div>
        </div>
      </header>
      <nav className="flex h-[30px] pl-[8px] pt-[6px] text-[#f2f2f2]">
        {menus.map((m) => (
          <div key={m.key + m.post} className={m.w}>
            <span className="inline-block origin-left scale-x-[0.94] whitespace-nowrap">
              {m.pre}<span className="underline decoration-1 underline-offset-[3px]">{m.key}</span>{m.post}
            </span>
          </div>
        ))}
      </nav>
      <div className="flex h-[977px] bg-black">
        <Toolbar />
        <main className="h-[977px] w-[1813px] border-y-2 border-r-[3px] border-b-[#eeeeec] border-r-[#eeeeec] border-t-[#e6e6e4] bg-[#dad9d5]">
          <Model />
        </main>
      </div>
      <footer className="flex h-[36px] border-t border-[#777] pl-[8px]">
        <svg viewBox="24 870 196 70" className="mt-[8px] h-[23px] w-[65px]" fill="none">
          <circle cx="56" cy="905" r="30" stroke="#666" strokeWidth="4" /><path d="M56 929Q53 910 45 899A12 12 0 1 1 67 899Q59 910 56 929Z" fill="#999" />
          <circle cx="182" cy="905" r="30" stroke="#777" strokeWidth="5" /><circle cx="182" cy="888" r="5" fill="#999" /><path d="M174 896H190V910H187V927H177V910H174Z" fill="#888" />
        </svg>
        <div className="ml-[55px] mt-[7px] h-[22px] w-[2px] bg-[#999]" />
        <span className="ml-[11px] mt-[9px] w-[564px] origin-left scale-x-[0.981] whitespace-nowrap">Select objects. Shift to extend select. Drag mouse to select multiple.</span>
        <div className="mt-[3px] h-[29px] w-[2px] bg-[#aaa]" />
        <div className="ml-auto mt-[7px] h-[22px] w-[2px] bg-[#999]" />
        <span className="ml-[12px] mt-[9px] w-[133px] origin-left scale-x-[0.978] whitespace-nowrap">Measurements</span>
        <div className="mr-[6px] mt-[3px] h-[30px] w-[301px] border-2 border-[#b5c4d8] bg-[#efefef]" />
      </footer>
      <div className="h-px bg-white" />
      <div className="relative h-px bg-black">
        {seams.map((s) => (
          <div key={s} className="absolute top-0 h-px w-[2px] bg-white" style={{ left: s }} />
        ))}
      </div>
    </div>
  );
}
